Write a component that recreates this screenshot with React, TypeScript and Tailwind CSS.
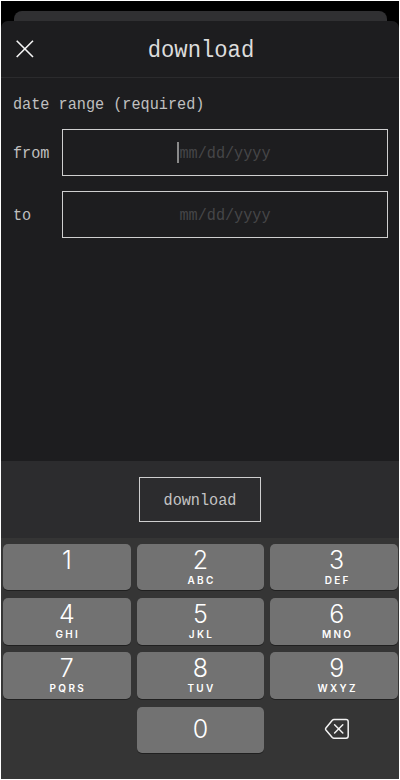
import React from "react";

const mono = "font-['Liberation_Mono',monospace]";

const keys: { digit: string; letters?: string; last?: boolean }[] = [
  { digit: "1" },
  { digit: "2", letters: "ABC" },
  { digit: "3", letters: "DEF", last: true },
  { digit: "4", letters: "GHI" },
  { digit: "5", letters: "JKL" },
  { digit: "6", letters: "MNO", last: true },
  { digit: "7", letters: "PQRS" },
  { digit: "8", letters: "TUV" },
  { digit: "9", letters: "WXYZ", last: true },
];

function Key({ digit, letters, last }: { digit: string; letters?: string; last?: boolean }) {
  return (
    <button
      className={`flex h-full flex-col items-center rounded-[5px] bg-[#727272] text-white shadow-[0_1px_0_#202020] ${
        digit === "0" ? "pt-[8px]" : "pt-[2px]"
      } ${last ? "pl-[5px]" : ""}`}
    >
      <span className="text-[25px] font-[350] leading-[29px]">{digit}</span>
      {letters && (
        <span className="-mr-[2px] text-[10px] font-semibold leading-[10px] tracking-[2.3px]">{letters}</span>
      )}
    </button>
  );
}

function DateField({ label, focused }: { label: string; focused?: boolean }) {
  return (
    <label className="flex items-center">
      <span className="w-[49px] text-[15.2px] text-[#c0c0c0]">
        <span className="inline-block translate-y-[2px] scale-y-110">{label}</span>
      </span>
      <span className="flex h-[47px] w-[326px] items-center justify-center border border-[#cfcfcf] text-[15.2px] text-[#464648]">
        <span className="relative">
          {focused && <span className="absolute left-[-2px] top-[1px] h-[21px] w-[2px] bg-[#8a8a8a]" />}
          <span className="inline-block translate-y-[2px] scale-y-110">mm/dd/yyyy</span>
        </span>
      </span>
    </label>
  );
}

export default function App() {
  return (
    <div className="h-[780px] w-[400px] overflow-hidden bg-white p-px">
      <div className="flex h-full flex-col bg-black">
        <div className="ml-[13px] mr-[12px] mt-[10px] h-[10px] shrink-0 rounded-t-[8px] bg-[#303032]" />
        <div className={`flex h-[440px] shrink-0 flex-col rounded-t-[7px] bg-[#1d1d1f] ${mono}`}>
          <header className="relative flex h-[57px] shrink-0 items-center justify-center border-b border-[#2b2b2d]">
            <button className="absolute left-[15px] top-[19px]" aria-label="close">
              <svg width="18" height="18" viewBox="0 0 18 18" fill="none" stroke="#f4f4f4" strokeWidth="1.6">
                <path d="M0.7 0.7 17 17M17 0.7 0.7 17" />
              </svg>
            </button>
            <h1 className="translate-x-px translate-y-[2px] scale-y-110 text-[22.2px] leading-[28px] text-[#dcdcdc]">download</h1>
          </header>
          <div className="pl-[12px] pr-[11px] pt-[16px]">
            <p className="translate-y-px scale-y-110 text-[15.2px] leading-[20px] text-[#c0c0c0]">date range (required)</p>
            <div className="mt-[15px] flex flex-col gap-[15px]">
              <DateField label="from" focused />
              <DateField label="to" />
            </div>
          </div>
        </div>
        <footer className={`flex h-[77px] shrink-0 justify-center bg-[#2c2c2e] pt-[16px] ${mono}`}>
          <button className="h-[45px] w-[122px] border border-[#cfcfcf] text-[15.2px] text-[#c4c4c4]">
            <span className="inline-block translate-y-[2px] scale-y-110">download</span>
          </button>
        </footer>
        <div className="grid flex-1 grid-cols-3 grid-rows-[46px_47px_47px_46px] content-start gap-x-[6px] gap-y-[7.5px] bg-[#353535] pl-[2px] pr-px pt-[6px] font-[Inter,sans-serif]">
          {keys.map((k) => (
            <Key key={k.digit} {...k} />
          ))}
          <span />
          <Key digit="0" />
          <button className="flex items-center justify-center pb-[2px] pl-[5px]" aria-label="delete">
            <svg width="26" height="22" viewBox="0 0 26 22" fill="none" stroke="#f2f2f2" strokeWidth="1.5" strokeLinecap="round" strokeLinejoin="round">
              <path d="M10 1.5H22Q24.2 1.5 24.2 3.7V18Q24.2 20.2 22 20.2H10Q9 20.2 8.3 19.5L1.9 12Q1.1 11 1.9 10L8.3 2.3Q9 1.5 10 1.5Z" />
              <path d="M10.6 6.8 18.8 15M18.8 6.8 10.6 15" />
            </svg>
          </button>
        </div>
      </div>
    </div>
  );
}
